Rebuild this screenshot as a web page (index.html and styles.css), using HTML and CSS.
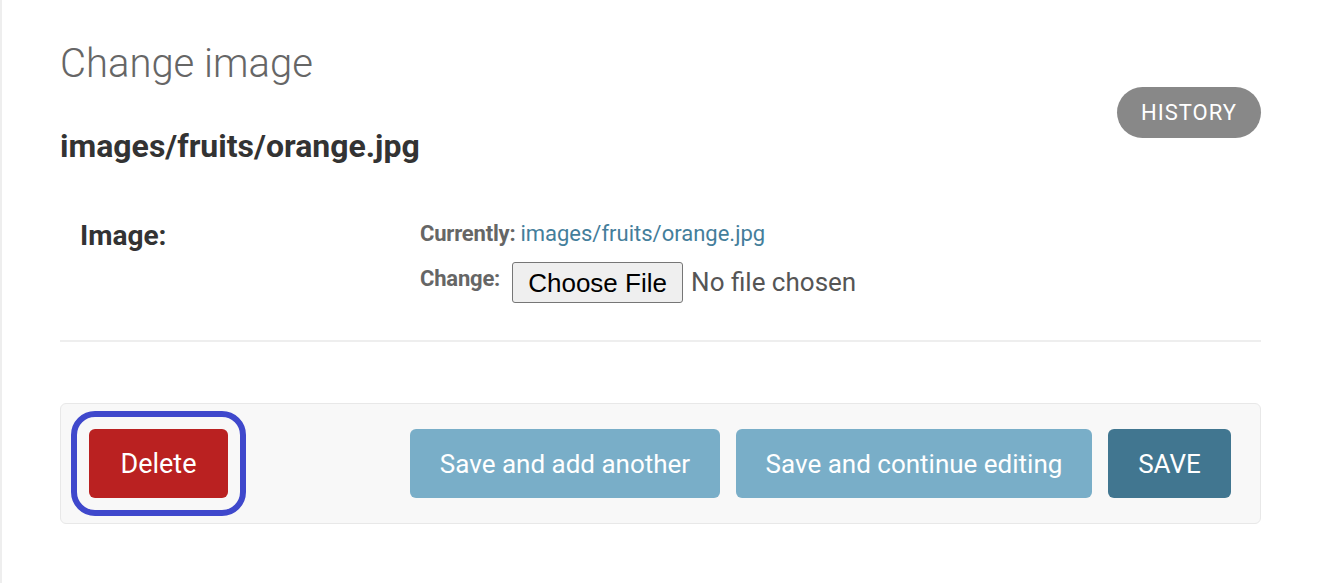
FILE: index.html
```html
<!DOCTYPE html>
<html lang="en">
<head>
<meta charset="utf-8">
<title>Change image</title>
<link rel="stylesheet" href="styles.css">
</head>
<body>
<main class="content">
  <h1 class="page-title">Change image</h1>
  <div class="title-row">
    <h2 class="object-title">images/fruits/orange.jpg</h2>
    <a class="history-btn" href="#">History</a>
  </div>
  <form class="change-form">
    <fieldset class="module">
      <div class="form-row">
        <label class="field-label">Image:</label>
        <div class="field-value">
          <p class="file-line">
            <span class="file-label">Currently:</span>
            <a class="file-link" href="#">images/fruits/orange.jpg</a>
          </p>
          <div class="file-line change-line">
            <span class="file-label change-label">Change:</span>
            <span class="file-btn">Choose File</span>
            <span class="file-none">No file chosen</span>
          </div>
        </div>
      </div>
    </fieldset>
    <div class="submit-row">
      <a class="btn btn-delete" href="#">Delete</a>
      <div class="spacer"></div>
      <button type="button" class="btn btn-secondary btn-add">Save and add another</button>
      <button type="button" class="btn btn-secondary btn-continue">Save and continue editing</button>
      <button type="button" class="btn btn-primary">SAVE</button>
    </div>
  </form>
</main>
</body>
</html>
```

FILE: styles.css
```css
html, body {
  margin: 0;
  padding: 0;
  background: #fff;
}

body {
  font-family: Roboto, "Liberation Sans", sans-serif;
  color: #333;
  border-left: 2px solid #eeeeee;
  min-height: 583px;
  box-sizing: border-box;
}

.content {
  padding: 40px 60px 0 58px;
}

.page-title {
  margin: 0;
  font-size: 40px;
  line-height: 47px;
  font-weight: 300;
  color: #666;
}

.title-row {
  display: flex;
  justify-content: space-between;
  align-items: flex-start;
}

.object-title {
  margin: 40px 0 0 0;
  font-size: 32px;
  line-height: 38px;
  font-weight: 700;
  color: #333;
}

.history-btn {
  display: inline-flex;
  align-items: center;
  justify-content: center;
  height: 51px;
  width: 144px;
  box-sizing: border-box;
  border-radius: 26px;
  background: #888;
  color: #fff;
  text-decoration: none;
  text-transform: uppercase;
  font-size: 22px;
  letter-spacing: 1px;
}

.change-form {
  margin: 0;
}

.module {
  margin: 54px 0 0 0;
  padding: 0;
  border: none;
  border-bottom: 2px solid #eeeeee;
}

.form-row {
  display: flex;
  padding: 0 0 37px 20px;
}

.field-label {
  width: 340px;
  flex-shrink: 0;
  font-size: 28px;
  line-height: 34px;
  font-weight: 700;
  color: #333;
}

.field-value {
  display: flex;
  flex-direction: column;
  gap: 13px;
}

.file-line {
  margin: 0;
  display: flex;
  align-items: baseline;
  gap: 5px;
  font-size: 22px;
  line-height: 30px;
}

.file-label {
  font-weight: 700;
  color: #666;
  font-size: 22px;
  letter-spacing: -0.2px;
}

.file-link {
  color: #447e9b;
  text-decoration: none;
}

.change-line {
  align-items: flex-start;
  gap: 0;
}

.change-label {
  margin-top: 2px;
  margin-right: 12px;
}

.file-btn {
  display: inline-flex;
  align-items: center;
  justify-content: center;
  box-sizing: border-box;
  height: 41px;
  width: 171px;
  border: 1px solid #767676;
  border-radius: 3px;
  background: #efefef;
  color: #000;
  font-family: "Liberation Sans", Arial, sans-serif;
  font-size: 26px;
}

.file-none {
  margin-left: 8px;
  font-size: 26px;
  line-height: 41px;
  color: #555;
}

.submit-row {
  margin-top: 61px;
  display: flex;
  align-items: center;
  gap: 16px;
  height: 121px;
  box-sizing: border-box;
  padding: 0 29px 0 28px;
  background: #f8f8f8;
  border: 1px solid #e8e8e8;
  border-radius: 6px;
}

.spacer {
  flex: 1;
}

.btn {
  display: inline-flex;
  align-items: center;
  justify-content: center;
  height: 69px;
  box-sizing: border-box;
  padding: 0;
  border: none;
  border-radius: 6px;
  font-family: Roboto, "Liberation Sans", sans-serif;
  font-size: 26px;
  color: #fff;
  text-decoration: none;
  cursor: pointer;
}

.btn-delete {
  width: 139px;
  font-size: 27px;
  background: #ba2121;
  outline: 6px solid #3f48cc;
  outline-offset: 12px;
}

.btn-secondary {
  background: #79aec8;
}

.btn-add {
  width: 310px;
}

.btn-continue {
  width: 356px;
}

.btn-primary {
  width: 123px;
  background: #417690;
}
```
